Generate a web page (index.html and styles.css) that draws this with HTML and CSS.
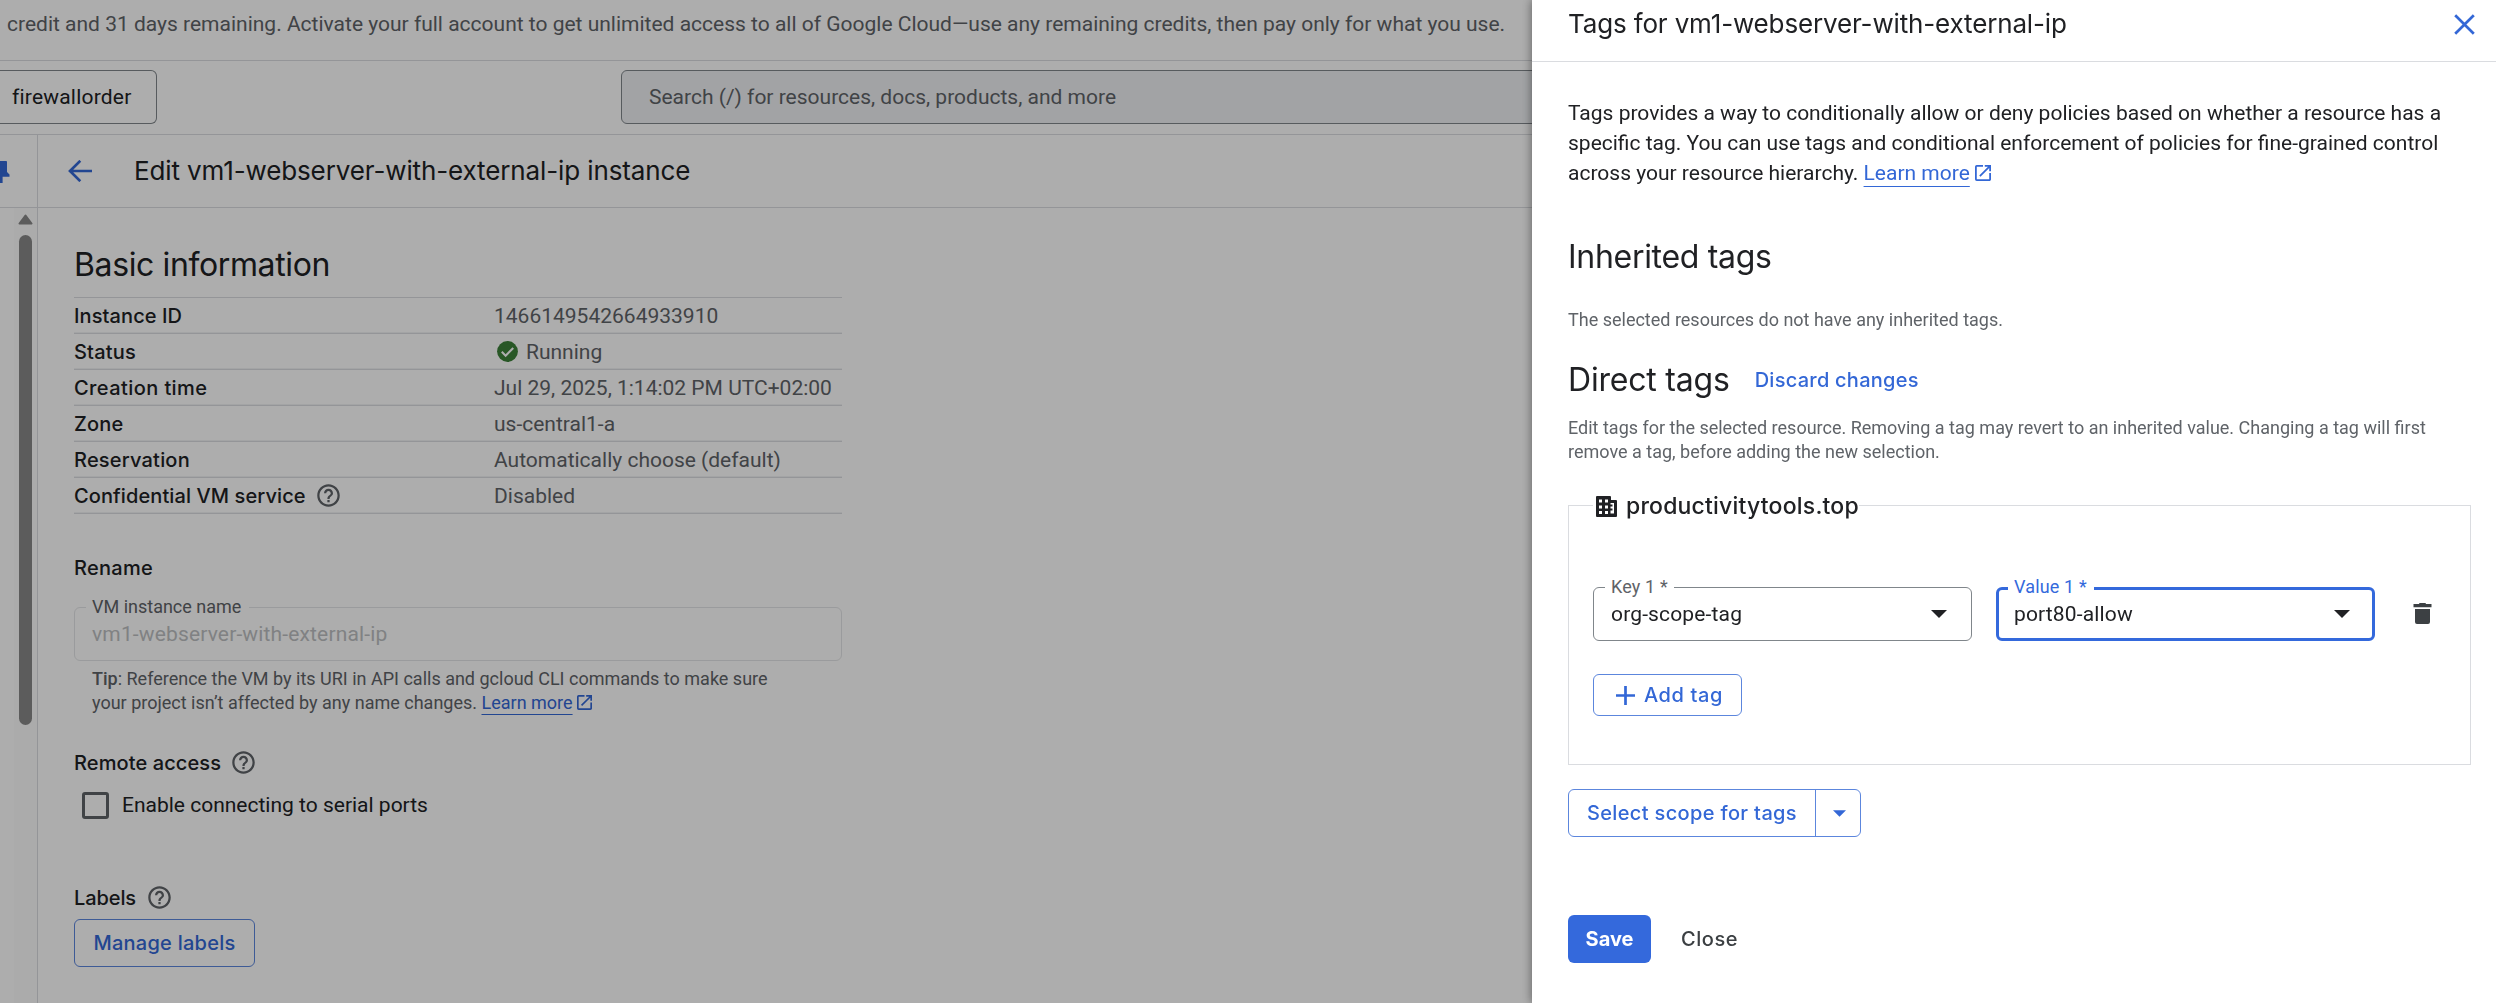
FILE: index.html
```html
<!DOCTYPE html>
<html lang="en">
<head>
<meta charset="utf-8">
<title>Edit vm1-webserver-with-external-ip instance</title>
<link rel="stylesheet" href="styles.css">
</head>
<body>
<svg width="0" height="0" class="defs" aria-hidden="true">
  <symbol id="help" viewBox="0 0 24 24"><path d="M11 18h2v-2h-2v2zm1-16C6.480 2 2 6.480 2 12s4.480 10 10 10 10-4.480 10-10S17.520 2 12 2zm0 18c-4.410 0-8-3.590-8-8s3.590-8 8-8 8 3.590 8 8-3.590 8-8 8zm0-14c-2.210 0-4 1.790-4 4h2c0-1.100.900-2 2-2s2 .900 2 2c0 2-3 1.750-3 5h2c0-2.250 3-2.500 3-5 0-2.210-1.790-4-4-4z"/></symbol>
  <symbol id="launch" viewBox="3 3 18 18"><path d="M19 19H5V5h7V3H5a2 2 0 0 0-2 2v14a2 2 0 0 0 2 2h14c1.100 0 2-.900 2-2v-7h-2v7zM14 3v2h3.590l-9.830 9.830 1.410 1.410L19 6.410V10h2V3h-7z"/></symbol>
  <symbol id="caret" viewBox="0 0 16 8"><path d="M0 0h16L8 8z"/></symbol>
</svg>

<div class="page">
  <div class="banner">credit and 31 days remaining. Activate your full account to get unlimited access to all of Google Cloud—use any remaining credits, then pay only for what you use.</div>
  <header class="topbar">
    <div class="project">firewallorder</div>
    <div class="search">Search (/) for resources, docs, products, and more</div>
  </header>
  <div class="body">
    <aside class="rail">
      <div class="rail-head">
        <svg class="pin" viewBox="0 0 10 22"><path d="M0 0H6.200Q7 0 7 1V11L9.500 13.500V15.700H2.600V22H0Z"/></svg>
      </div>
      <div class="scrollbar">
        <svg class="scroll-up" viewBox="0 0 15 11"><path d="M7.500 1.500L13.500 9.500H1.500Z" stroke-width="2" stroke-linejoin="round"/></svg>
        <div class="thumb"></div>
      </div>
    </aside>
    <main class="main">
      <div class="page-head">
        <svg class="back" viewBox="0 0 24 22"><path d="M24 11H2M12.300 .800L2 11l10.300 10.200"/></svg>
        <h1 class="page-title">Edit vm1-webserver-with-external-ip instance</h1>
      </div>
      <div class="content">
        <h2 class="section-title">Basic information</h2>
        <div class="table">
          <div class="row"><span class="key k1">Instance ID</span><span>1466149542664933910</span></div>
          <div class="row"><span class="key k2">Status</span><span class="status"><svg class="ok" viewBox="0 0 24 24"><circle cx="12" cy="12" r="10"/><path d="M6.500 12.300l3.700 3.700 7.300-7.400"/></svg>Running</span></div>
          <div class="row"><span class="key k3">Creation time</span><span>Jul 29, 2025, 1:14:02 PM UTC+02:00</span></div>
          <div class="row"><span class="key k2">Zone</span><span>us-central1-a</span></div>
          <div class="row"><span class="key k2">Reservation</span><span>Automatically choose (default)</span></div>
          <div class="row"><span class="key k1">Confidential VM service<svg class="help"><use href="#help"/></svg></span><span>Disabled</span></div>
        </div>

        <h3 class="sub rename">Rename</h3>
        <div class="field"><span class="field-label">VM instance name</span>vm1-webserver-with-external-ip</div>
        <p class="tip"><b>Tip</b>: Reference the VM by its URI in API calls and gcloud CLI commands to make sure<br>your project isn’t affected by any name changes. <a class="link">Learn more</a><svg class="launch small"><use href="#launch"/></svg></p>

        <h3 class="sub remote">Remote access<svg class="help"><use href="#help"/></svg></h3>
        <div class="check"><span class="box"></span>Enable connecting to serial ports</div>

        <h3 class="sub labels">Labels<svg class="help"><use href="#help"/></svg></h3>
        <div class="btn manage">Manage labels</div>
      </div>
    </main>
  </div>
</div>

<div class="scrim"></div>

<section class="panel">
  <header class="panel-head">
    <h2 class="panel-title">Tags for vm1-webserver-with-external-ip</h2>
    <svg class="close" viewBox="0 0 21 21"><path d="M1.200 1.200l18.600 18.600M19.800 1.200L1.200 19.800"/></svg>
  </header>
  <div class="panel-body">
    <p class="intro">Tags provides a way to conditionally allow or deny policies based on whether a resource has a<br>specific tag. You can use tags and conditional enforcement of policies for fine-grained control<br>across your resource hierarchy. <a class="link">Learn more</a><svg class="launch"><use href="#launch"/></svg></p>
    <h3 class="heading inherited">Inherited tags</h3>
    <p class="note first">The selected resources do not have any inherited tags.</p>
    <div class="direct">
      <h3 class="heading">Direct tags</h3>
      <span class="discard">Discard changes</span>
    </div>
    <p class="note">Edit tags for the selected resource. Removing a tag may revert to an inherited value. Changing a tag will first<br>remove a tag, before adding the new selection.</p>

    <div class="scope">
      <div class="legend">
        <svg class="org" viewBox="0 0 21 21"><path fill-rule="evenodd" d="M1 0H14Q15 0 15 1V4H20Q21 4 21 5V20Q21 21 20 21H1Q0 21 0 20V1Q0 0 1 0ZM3 3.500v3h3v-3ZM9 3.500v3h3v-3ZM3 9.500v3h3v-3ZM9 9.500v3h3v-3ZM3 15v3h3v-3ZM9 15v3h3v-3ZM14.500 7V8.500H16.500V10.500H14.500V12.500H16.500V14.500H14.500V17.500H18V7Z"/></svg>
        productivitytools.top
      </div>
      <div class="pair">
        <div class="select"><span class="select-label">Key 1 *</span>org-scope-tag<svg class="caret"><use href="#caret"/></svg></div>
        <div class="select focused"><span class="select-label">Value 1 *</span>port80-allow<svg class="caret"><use href="#caret"/></svg></div>
        <svg class="trash" viewBox="0 0 19 21"><path d="M6 1Q6 0 7 0h5Q13 0 13 1h5.500v3.200H.500V1ZM2 6h15v13q0 2-2 2H4q-2 0-2-2Z"/></svg>
      </div>
      <div class="btn add"><svg class="plus" viewBox="0 0 19 19"><path d="M9.500 0V19M0 9.500H19"/></svg>Add tag</div>
    </div>

    <div class="btn split">
      <span class="split-main">Select scope for tags</span>
      <span class="split-menu"><svg><use href="#caret"/></svg></span>
    </div>

    <div class="actions">
      <div class="save">Save</div>
      <div class="dismiss">Close</div>
    </div>
  </div>
</section>
</body>
</html>
```
FILE: styles.css
```css
* { box-sizing: border-box; }

html, body { margin: 0; height: 100%; overflow: hidden; }

body {
  background: #fff;
  color: #202124;
  font-family: Roboto, "Liberation Sans", sans-serif;
  font-size: 21px;
  white-space: nowrap;
}

h1, h2, h3, p { margin: 0; font-weight: 400; }
svg { display: block; flex: none; }
.defs { position: absolute; }

.page { height: 1003px; display: flex; flex-direction: column; }

.banner {
  flex: none;
  height: 61px;
  padding-left: 7px;
  line-height: 48px;
  color: #5f6368;
  border-bottom: 1px solid #dadce0;
}

.topbar {
  flex: none;
  display: flex;
  align-items: center;
  justify-content: space-between;
  height: 74px;
  padding-bottom: 2px;
  border-bottom: 1px solid #dadce0;
}

.project, .search {
  height: 54px;
  line-height: 53px;
  border: 1px solid #80868b;
  border-radius: 6px;
}

.project {
  width: 158px;
  margin-left: -1px;
  padding-left: 13px;
  border-left: 0;
  border-radius: 0 6px 6px 0;
  letter-spacing: .2px;
}

.search {
  width: 1875px;
  padding-left: 27px;
  background: #eff1f4;
  color: #5f6368;
}

.body { flex: 1; display: flex; min-height: 0; }

.rail {
  flex: none;
  width: 38px;
  border-right: 1px solid #dadce0;
  display: flex;
  flex-direction: column;
}

.rail-head {
  height: 73px;
  padding-top: 26px;
  border-bottom: 1px solid #dadce0;
}

.pin { width: 10px; height: 22px; fill: #3367d6; }

.scrollbar {
  flex: 1;
  width: 23px;
  margin-left: 14px;
  padding: 6px 4px 0;
  background: #fcfcfc;
}

.scroll-up { width: 15px; height: 11px; fill: #888; stroke: #888; }
.thumb { width: 13px; height: 490px; margin: 10px 0 0 1px; border-radius: 7px; background: #888; }

.main { flex: 1; min-width: 0; }

.page-head {
  display: flex;
  align-items: center;
  height: 73px;
  padding-left: 30px;
  border-bottom: 1px solid #dadce0;
}

.back { width: 24px; height: 22px; fill: none; stroke: #3367d6; stroke-width: 2.700; }

.page-title, .section-title, .key, .sub, .btn, .panel-title, .heading, .discard, .legend, .save, .dismiss {
  font-family: Inter, Roboto, sans-serif;
}

.page-title { margin: -1px 0 0 42px; font-size: 26px; letter-spacing: -.12px; }

.content { width: 804px; padding: 24px 0 0 36px; }
.section-title { font-size: 32px; line-height: 65px; letter-spacing: -.38px; }

.table { border-top: 1px solid #dadce0; color: #5f6368; }

.row {
  display: flex;
  align-items: center;
  height: 36px;
  border-bottom: 1px solid #dadce0;
  box-shadow: inset 0 -1px #f1f2f3;
}

.key {
  display: flex;
  align-items: center;
  width: 420px;
  font-size: 20px;
  font-weight: 500;
  color: #202124;
}

.k1 { letter-spacing: .1px; }
.k2 { letter-spacing: .2px; }
.k3 { letter-spacing: .42px; }

.status { display: flex; align-items: center; gap: 6px; margin-left: 1px; }
.ok { width: 25px; height: 25px; fill: #3c8039; }
.ok path { fill: none; stroke: #fff; stroke-width: 2; }
.help { width: 27px; height: 27px; margin-left: 9px; fill: #5f6368; }

.sub {
  display: flex;
  align-items: center;
  height: 35px;
  font-size: 20px;
  font-weight: 500;
  letter-spacing: .1px;
}

.rename { margin-top: 36px; letter-spacing: .28px; }
.remote { margin-top: 30px; }
.labels { margin-top: 50px; letter-spacing: -.1px; }
.labels .help { margin-left: 10px; }

.field {
  position: relative;
  height: 54px;
  margin-top: 22px;
  padding-left: 17px;
  line-height: 52px;
  border: 1px solid #e4e5e7;
  border-radius: 6px;
  color: #bdbfc2;
  letter-spacing: .15px;
}

.field-label {
  position: absolute;
  top: -13px;
  left: 11px;
  width: 163px;
  padding-left: 6px;
  background: #fff;
  color: #5f6368;
  font-size: 18px;
  line-height: 24px;
  letter-spacing: 0;
}

.tip {
  margin-top: 6px;
  padding-left: 18px;
  color: #5f6368;
  font-size: 18px;
  line-height: 24px;
}

.tip b { font-weight: 500; }

.link {
  color: #3367d6;
  text-decoration: underline;
  text-decoration-thickness: 1px;
  text-underline-offset: 5px;
  text-decoration-skip-ink: none;
}

.intro .link { text-underline-offset: 6px; }

.launch {
  display: inline-block;
  width: 16px;
  height: 16px;
  margin-left: 5px;
  vertical-align: -1px;
  fill: #3367d6;
}

.small { width: 15px; height: 15px; margin-left: 4px; }

.check { display: flex; align-items: center; height: 50px; padding-left: 8px; }
.box { width: 27px; height: 27px; margin-right: 13px; border: 3px solid #5f6368; border-radius: 3px; }

.btn {
  border: 1px solid #5c86dd;
  border-radius: 6px;
  color: #3367d6;
  font-size: 20px;
  font-weight: 500;
}

.manage {
  width: 181px;
  height: 48px;
  margin-top: 4px;
  line-height: 46px;
  text-align: center;
  letter-spacing: .25px;
}

.scrim { position: fixed; inset: 0; background: rgba(0, 0, 0, .32); }

.panel {
  position: fixed;
  top: 0;
  right: 0;
  width: 964px;
  height: 1003px;
  background: #fff;
  box-shadow: -1px 0 9px rgba(0, 0, 0, .4);
}

.panel-head {
  display: flex;
  justify-content: space-between;
  height: 62px;
  padding: 0 21px 0 36px;
  border-bottom: 1px solid #dadce0;
}

.panel-title { font-size: 26px; line-height: 48px; letter-spacing: -.15px; }
.close { width: 21px; height: 21px; margin-top: 14px; fill: none; stroke: #3367d6; stroke-width: 2.700; }

.panel-body { padding: 36px 25px 0 36px; }
.intro { line-height: 30px; }

.heading { font-size: 32px; line-height: 40px; letter-spacing: -.2px; }
.inherited { margin-top: 49px; letter-spacing: -.3px; }

.note { margin-top: 16px; color: #5f6368; font-size: 18px; line-height: 24px; }
.note.first { margin-top: 31px; }

.direct { display: flex; align-items: center; gap: 25px; margin-top: 28px; }
.discard { color: #3367d6; font-size: 20px; font-weight: 500; letter-spacing: .25px; }

.scope {
  position: relative;
  height: 260px;
  margin-top: 41px;
  padding: 81px 24px 0;
  border: 1px solid #dadce0;
}

.legend {
  position: absolute;
  top: -17px;
  left: 24px;
  display: flex;
  align-items: center;
  gap: 9px;
  height: 34px;
  padding-left: 3px;
  background: #fff;
  font-size: 23px;
  font-weight: 500;
  letter-spacing: .2px;
}

.org { width: 21px; height: 21px; margin-top: 1px; fill: #202124; }

.pair { display: flex; align-items: center; gap: 24px; }

.select {
  position: relative;
  display: flex;
  align-items: center;
  justify-content: space-between;
  width: 379px;
  height: 54px;
  padding: 0 24px 0 17px;
  border: 1px solid #80868b;
  border-radius: 6px;
  letter-spacing: .15px;
}

.select-label {
  position: absolute;
  top: -13px;
  left: 11px;
  padding: 0 6px;
  background: #fff;
  color: #5f6368;
  font-size: 18px;
  line-height: 24px;
}

.focused { padding: 0 22px 0 15px; border: 3px solid #3469dc; }
.focused .select-label { top: -15px; left: 9px; padding-right: 7px; color: #3469dc; }

.caret { width: 16px; height: 8px; fill: #202124; }
.trash { width: 19px; height: 21px; margin: -2px 0 0 14px; fill: #3c4043; }

.add {
  display: flex;
  align-items: center;
  gap: 9px;
  width: 149px;
  height: 42px;
  margin-top: 33px;
  padding-left: 22px;
  letter-spacing: .6px;
}

.plus { width: 19px; height: 19px; stroke: #3367d6; stroke-width: 2.700; }

.split { display: flex; width: 293px; height: 48px; margin-top: 24px; line-height: 46px; }
.split-main { flex: 1; padding-left: 18px; letter-spacing: .35px; }

.split-menu {
  display: flex;
  align-items: center;
  justify-content: center;
  width: 45px;
  padding-left: 2px;
  border-left: 1px solid #5c86dd;
}

.split-menu svg { width: 13px; height: 7px; fill: #3367d6; }

.actions { display: flex; gap: 30px; margin-top: 78px; font-size: 20px; line-height: 48px; }
.save { width: 83px; text-align: center; background: #3469dc; color: #fff; border-radius: 6px; font-weight: 700; }
.dismiss { color: #3c4043; font-weight: 500; letter-spacing: .55px; }
```
